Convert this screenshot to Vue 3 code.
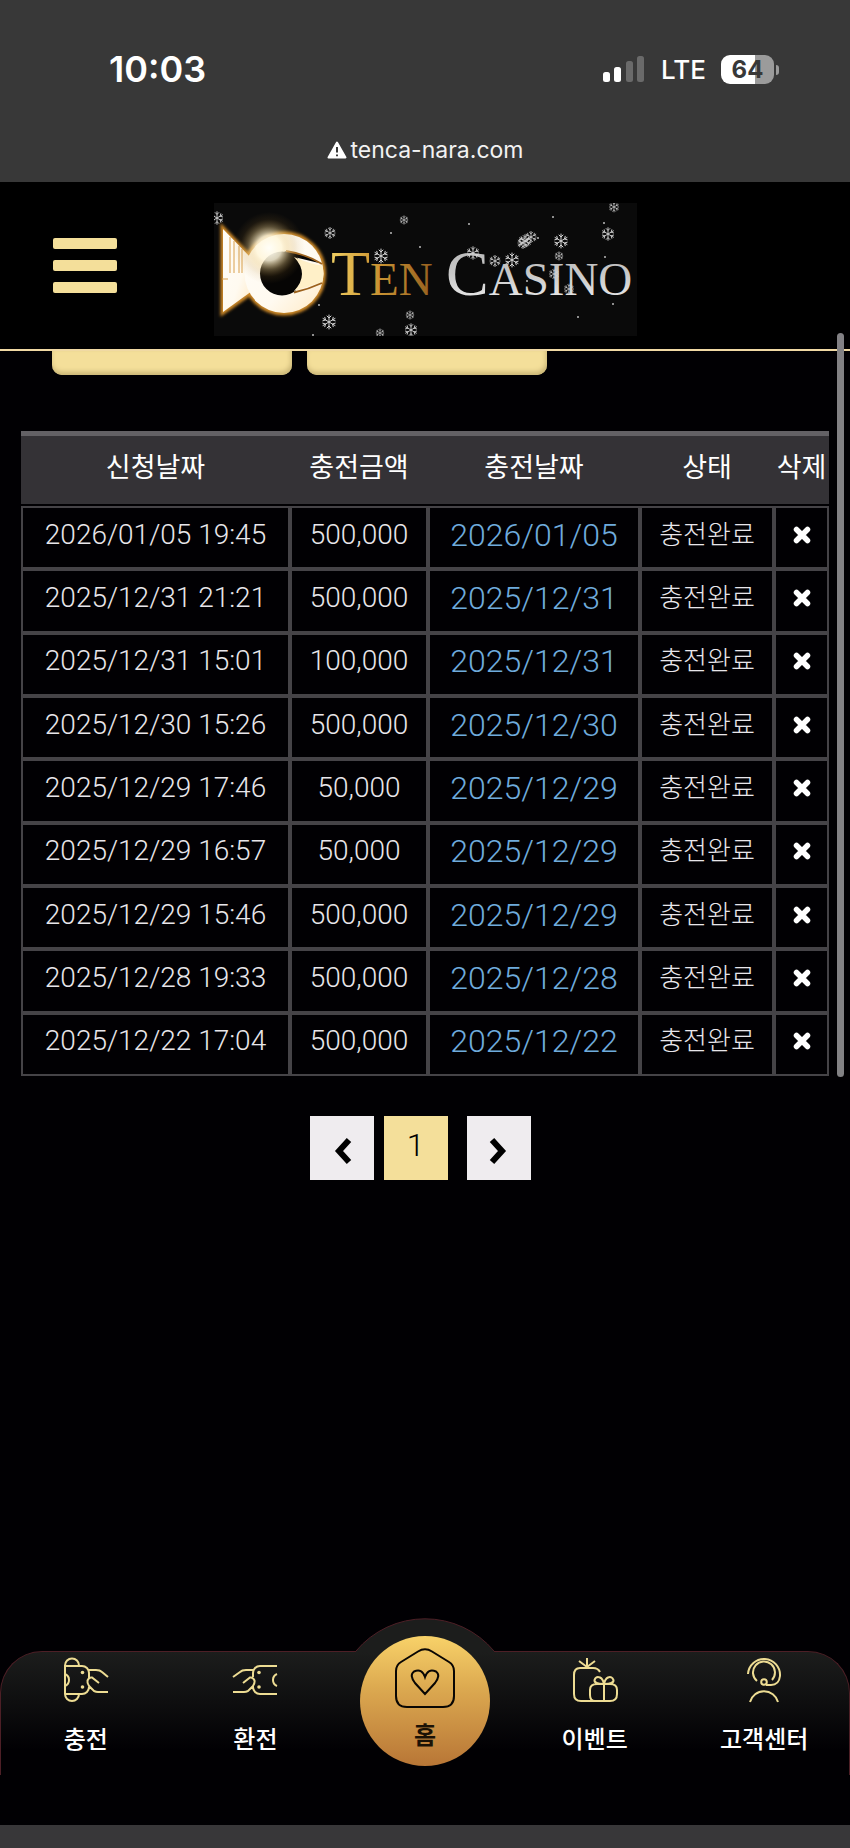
<template>
  <div class="page">
    <!-- Phone status bar and address -->
    <div class="status">
      <div class="status-row">
        <span class="clock">10:03</span>
        <div class="status-right">
          <svg class="signal" viewBox="0 0 42 28" fill="#fff" aria-hidden="true">
            <rect x="0" y="17" width="7" height="10" rx="2.5" />
            <rect x="11" y="12" width="7" height="15" rx="2.5" />
            <rect x="23" y="6" width="7" height="21" rx="2.5" opacity="0.25" />
            <rect x="34" y="1" width="7" height="26" rx="2.5" opacity="0.25" />
          </svg>
          <span class="network">LTE</span>
          <div class="battery"><span class="battery-level">64</span></div>
        </div>
      </div>
      <div class="address">
        <svg viewBox="0 0 20 18" aria-hidden="true">
          <path d="M10 1.5 18.5 16.5H1.500Z" fill="#fff" stroke="#fff" stroke-width="2" stroke-linejoin="round" />
          <path d="M10 6v5.500M10 13.500v1.800" stroke="#383838" stroke-width="2" />
        </svg>
        <span>tenca-nara.com</span>
      </div>
    </div>

    <header class="header">
      <button class="menu" type="button" aria-label="메뉴">
        <span></span>
        <span></span>
        <span></span>
      </button>
      <a class="logo" href="#" aria-label="Ten Casino">
        <svg viewBox="0 0 423 133">
          <defs>
            <linearGradient id="gold" x1="0" x2="1" y1="0" y2="0">
              <stop offset="0" stop-color="#f0cf63" />
              <stop offset="0.4" stop-color="#d09a36" />
              <stop offset="1" stop-color="#96601f" />
            </linearGradient>
            <linearGradient id="silver" x1="0" x2="0" y1="0" y2="1">
              <stop offset="0" stop-color="#b4b4b4" />
              <stop offset="0.5" stop-color="#c8c8c8" />
              <stop offset="1" stop-color="#f4f4f4" />
            </linearGradient>
            <linearGradient id="fish" x1="0" x2="1" y1="0" y2="1">
              <stop offset="0" stop-color="#fffdf8" />
              <stop offset="0.6" stop-color="#fffaf0" />
              <stop offset="1" stop-color="#ffe9c4" />
            </linearGradient>
            <radialGradient id="flare">
              <stop offset="0" stop-color="#fffef8" />
              <stop offset="0.35" stop-color="#fff6da" stop-opacity="0.85" />
              <stop offset="0.6" stop-color="#e8c883" stop-opacity="0.35" />
              <stop offset="0.8" stop-color="#b98a3a" stop-opacity="0.1" />
              <stop offset="1" stop-color="#b98a3a" stop-opacity="0" />
            </radialGradient>
            <filter id="glow" x="-20%" y="-20%" width="140%" height="140%">
              <feGaussianBlur stdDeviation="1.5" />
            </filter>
            <g id="flake" fill="none" stroke="#d6d6d6" stroke-width="1" stroke-linecap="round">
              <path d="M0-7V7M-6-3.500 6 3.500M-6 3.500 6-3.500" />
              <path d="M-2-6 0-4 2-6M-2 6 0 4 2 6M-6.200-1.200-3.500-2-4.200-4.700M6.200 1.200 3.500 2 4.200 4.700M-6.200 1.200-3.500 2-4.200 4.700M6.200-1.200 3.500-2 4.200-4.700" />
            </g>
          </defs>
          <rect width="423" height="133" fill="#0a0a0a" />
          <g fill="none" stroke="#d08a28" stroke-width="5" filter="url(#glow)">
            <path d="M9 26 32 50V93L9 109Z" />
            <circle cx="70" cy="70.500" r="39.500" />
          </g>
          <path d="M9 26 38 56V88L9 109Z" fill="url(#fish)" />
          <path d="M16 34V70M20 38V70M25 43V70M28 46V70M8 76H14" stroke="#d9a04c" />
          <circle cx="70" cy="70.500" r="39.500" fill="url(#fish)" />
          <circle cx="68" cy="70.500" r="22" fill="#060504" />
          <path d="M70 48Q90 50 105 60L80 54Z" fill="#060504" />
          <path d="M80 54Q96 61 108 62.500 111 71 108 79Q95 83 80 88Q96 71 80 54Z" fill="#fff0c8" />
          <path d="M72 48Q92 51 108 61M80 89.500Q95 86 108 80" fill="none" stroke="#9c611c" stroke-width="1.800" />
          <circle cx="55" cy="45" r="36" fill="url(#flare)" />
          <g class="brand" fill="url(#gold)">
            <text x="117" y="92"><tspan class="cap">T</tspan><tspan>EN</tspan></text>
          </g>
          <g class="brand" fill="url(#silver)">
            <text x="232" y="92"><tspan class="cap">C</tspan><tspan>ASINO</tspan></text>
          </g>
          <use
            v-for="(flake, index) in flakes"
            :key="index"
            href="#flake"
            :transform="`translate(${flake[0]} ${flake[1]}) scale(${flake[2]})`"
          />
          <circle v-for="(dot, index) in dots" :key="`dot-${index}`" :cx="dot[0]" :cy="dot[1]" r="1" fill="#bbb" />
        </svg>
      </a>
    </header>

    <main class="content">
      <div class="tabs">
        <button class="tab" type="button" aria-label="충전신청"></button>
        <button class="tab" type="button" aria-label="충전내역"></button>
      </div>

      <table class="history">
        <colgroup>
          <col class="col-requested" />
          <col class="col-amount" />
          <col class="col-date" />
          <col class="col-state" />
          <col class="col-delete" />
        </colgroup>
        <thead>
          <tr>
            <th v-for="title in titles" :key="title">{{ title }}</th>
          </tr>
        </thead>
        <tbody>
          <tr v-for="row in rows" :key="row.requested">
            <td>{{ row.requested }}</td>
            <td>{{ row.amount }}</td>
            <td class="date">{{ row.requested.split(' ')[0] }}</td>
            <td class="state">충전완료</td>
            <td>
              <button class="delete" type="button" aria-label="삭제">
                <svg viewBox="0 0 18 18">
                  <path d="M3.500 3.500 14.500 14.500M14.500 3.500 3.500 14.500" stroke="#fff" stroke-width="5.500" stroke-linecap="round" />
                </svg>
              </button>
            </td>
          </tr>
        </tbody>
      </table>

      <nav class="pagination" aria-label="페이지">
        <button class="page-button" type="button" aria-label="이전">
          <svg viewBox="0 0 20 28"><path d="M17 3 7 14 17 25" /></svg>
        </button>
        <button class="page-button current" type="button">1</button>
        <button class="page-button next" type="button" aria-label="다음">
          <svg viewBox="0 0 20 28"><path d="M3 3 13 14 3 25" /></svg>
        </button>
      </nav>
      <div class="scrollbar"></div>
    </main>

    <nav class="bottom-nav">
      <svg class="hump" viewBox="0 0 140 34" aria-hidden="true">
        <path d="M1 33A90 90 0 0 1 139 33V34H1Z" fill="#1c1d1c" />
        <path d="M1 33A90 90 0 0 1 139 33" fill="none" stroke="#4d1f26" />
      </svg>
      <div class="nav-items">
        <a class="nav-item" href="#">
          <svg class="nav-icon" viewBox="0 0 44 44">
            <path d="M1 36V7.500a6.500 6.500 0 0 1 14 0V8M1 8H18a7 7 0 0 1 7 7V20M1 36H18a7 7 0 0 0 7-7M1 36a7 7 0 0 0 14 0M1 16a6.500 6.500 0 0 1 0 12M25 12H32Q36 12 38 14L44 19M35 25 28 19.500Q25 19 23.500 22.500 23 25 25 28L30 33Q32 34 34 34H44" />
            <g class="dots"><circle cx="18.500" cy="14.500" r="1.800" /><circle cx="18.500" cy="29" r="1.800" /></g>
          </svg>
          <span>충전</span>
        </a>
        <a class="nav-item" href="#">
          <svg class="nav-icon" viewBox="0 0 44 44">
            <path d="M44 8H27a7 7 0 0 0-7 7V19M44 36H27a7 7 0 0 1-7-7V28M44 16a6.500 6.500 0 0 0 0 12M20 12H13Q9 12 7 14L0 19M10 25 17 19.500Q20 19 21.500 22.500 22 25 20 28L15 33Q13 34 11 34H0" />
            <g class="dots"><circle cx="26" cy="14.500" r="1.800" /><circle cx="26" cy="29" r="1.800" /></g>
          </svg>
          <span>환전</span>
        </a>
        <a class="nav-item home" href="#">
          <span class="home-disc">
            <svg class="home-icon" viewBox="0 0 60 60">
              <path d="M23 3.500Q30-1 37 3.500L54 14Q59 17 59 23V48Q59 59 48 59H12Q1 59 1 48V23Q1 17 6 14Z" />
              <path d="M30 46 20 35Q14 27 19 23.500 27 20 30 29 33 20 41 23.500 46 27 40 35Z" />
            </svg>
            <span>홈</span>
          </span>
        </a>
        <a class="nav-item" href="#">
          <svg class="nav-icon" viewBox="0 0 44 44">
            <path d="M27 14Q25 10 20 10H7Q1 10 1 17V36Q1 43 8 43H37Q44 43 44 36V32Q44 26 37 26H24Q17 26 17 32V37Q17 43 22 43M31 43V26M31 26Q21 26 21.500 22 23 18 27 19.500 30 21 31 26 32 21 35 19.500 39 18 40.500 22 41 26 31 26M14 10V0M14 9 6 3M14 9 22 3" />
          </svg>
          <span>이벤트</span>
        </a>
        <a class="nav-item" href="#">
          <svg class="nav-icon" viewBox="0 0 44 44">
            <path d="M6 16A16 16 0 1 1 38 18Q37 27 29 27H24M15 23A11 11 0 1 1 30 22M8 44A14.500 14.500 0 0 1 36 44" />
            <circle cx="22" cy="24" r="2.800" />
          </svg>
          <span>고객센터</span>
        </a>
      </div>
    </nav>
    <div class="browser-bar"></div>
  </div>
</template>

<script setup>
const titles = ['신청날짜', '충전금액', '충전날짜', '상태', '삭제']

const rows = [
  { requested: '2026/01/05 19:45', amount: '500,000' },
  { requested: '2025/12/31 21:21', amount: '500,000' },
  { requested: '2025/12/31 15:01', amount: '100,000' },
  { requested: '2025/12/30 15:26', amount: '500,000' },
  { requested: '2025/12/29 17:46', amount: '50,000' },
  { requested: '2025/12/29 16:57', amount: '50,000' },
  { requested: '2025/12/29 15:46', amount: '500,000' },
  { requested: '2025/12/28 19:33', amount: '500,000' },
  { requested: '2025/12/22 17:04', amount: '500,000' }
]

// x, y and scale of each snowflake over the logo
const flakes = [
  [3, 15, 0.9],
  [116, 30, 0.8],
  [190, 17, 0.6],
  [167, 53, 1],
  [115, 119, 1],
  [196, 112, 0.6],
  [197, 127, 0.9],
  [166, 130, 0.6],
  [259, 50, 0.9],
  [281, 58, 0.8],
  [298, 57, 1],
  [309, 40, 0.8],
  [311, 38, 0.9],
  [317, 34, 0.8],
  [347, 38, 1],
  [345, 53, 0.6],
  [340, 71, 0.7],
  [355, 86, 0.7],
  [394, 31, 0.9],
  [400, 4, 0.7]
]

const dots = [
  [177, 30],
  [206, 44],
  [255, 21],
  [339, 14],
  [324, 35],
  [390, 20],
  [391, 54],
  [399, 101],
  [364, 114],
  [105, 102],
  [99, 132],
  [313, 78]
]
</script>

<style>
body {
  margin: 0;
  background: #010003;
}
</style>

<style scoped>
.page {
  display: flex;
  flex-direction: column;
  min-height: 100vh;
  background: #010003;
  color: #fff;
  font-family: Roboto, "Noto Sans CJK KR", sans-serif;
}

button {
  padding: 0;
  border: 0;
  font: inherit;
  cursor: pointer;
}

a {
  color: inherit;
  text-decoration: none;
}

.status {
  box-sizing: border-box;
  height: 182px;
  padding-top: 48px;
  background: #383838;
  font-family: Inter, sans-serif;
}

.status-row {
  display: flex;
  align-items: center;
  justify-content: space-between;
  height: 42px;
  padding: 0 76px 0 109px;
}

.clock {
  font-size: 36px;
  font-weight: 600;
}

.status-right {
  display: flex;
  align-items: center;
}

.signal {
  width: 42px;
  height: 28px;
  margin-right: 16px;
}

.network {
  margin-right: 15px;
  font-size: 26px;
  font-weight: 500;
}

.battery {
  position: relative;
  width: 53px;
  height: 29px;
  border-radius: 9px;
  background: linear-gradient(to right, #fff 64%, #9b9b9b 64%);
  color: #383838;
  text-align: center;
}

.battery::after {
  content: "";
  position: absolute;
  top: 10px;
  right: -5px;
  width: 3px;
  height: 10px;
  border-radius: 0 3px 3px 0;
  background: #9b9b9b;
}

.battery-level {
  font-size: 24px;
  font-weight: 700;
  line-height: 29px;
}

.address {
  display: flex;
  align-items: center;
  justify-content: center;
  gap: 4px;
  height: 32px;
  margin-top: 44px;
  font-size: 23px;
  color: #f2f2f2;
}

.address svg {
  width: 20px;
  height: 18px;
}

.header {
  box-sizing: border-box;
  display: grid;
  grid-template-columns: 1fr 423px 1fr;
  align-items: center;
  height: 169px;
  border-bottom: 2px solid #f0d9a4;
  background: #000;
}

.menu {
  display: flex;
  flex-direction: column;
  gap: 11px;
  width: 64px;
  margin-left: 53px;
  background: none;
}

.menu span {
  height: 11px;
  border-radius: 2px;
  background: #f4df9a;
}

.logo {
  padding-top: 8px;
}

.logo svg {
  display: block;
  width: 100%;
}

.brand {
  font-family: "Liberation Serif", serif;
  font-size: 47px;
}

.brand .cap {
  font-size: 64px;
}

.content {
  position: relative;
  flex: 1;
  padding: 0 21px;
}

.tabs {
  display: flex;
  gap: 15px;
  padding: 0 31px;
}

.tab {
  width: 240px;
  height: 24px;
  border-radius: 0 0 10px 10px;
  background: #f4df9a;
  box-shadow: inset -1px -3px 5px #c9b576;
}

.history {
  width: 100%;
  height: 645px;
  margin-top: 56px;
  border-spacing: 0;
  table-layout: fixed;
  text-align: center;
}

.col-requested {
  width: 269px;
}

.col-amount {
  width: 138px;
}

.col-date {
  width: 212px;
}

.col-state {
  width: 134px;
}

.col-delete {
  width: 55px;
}

.history th {
  height: 58px;
  padding: 0 0 10px;
  border-top: 5px solid #636165;
  border-bottom: 2px solid #010003;
  background: #343236;
  background-clip: padding-box;
  font-size: 27px;
  font-weight: 400;
  white-space: nowrap;
}

.history td {
  padding: 0 0 6px;
  border: 2px solid #454347;
  color: #e8e6ea;
  font-size: 28px;
  font-weight: 300;
  line-height: 32px;
  white-space: nowrap;
}

.history .date {
  color: #6fabdc;
  font-size: 32px;
}

.history .state {
  font-size: 26px;
}

.delete {
  display: block;
  width: 18px;
  height: 18px;
  margin: 0 auto;
  background: none;
}

.delete svg {
  display: block;
}

.pagination {
  display: flex;
  gap: 10px;
  justify-content: center;
  margin-top: 40px;
  padding-right: 10px;
}

.page-button {
  display: flex;
  align-items: center;
  justify-content: center;
  width: 64px;
  height: 64px;
  padding-top: 6px;
  background: #efecef;
}

.page-button svg {
  width: 20px;
  height: 28px;
  fill: none;
  stroke: #000;
  stroke-width: 6;
}

.page-button.current {
  padding: 0 0 6px;
  background: #f4df9a;
  color: #000;
  font-size: 32px;
  font-weight: 300;
}

.page-button.next {
  margin-left: 9px;
}

.scrollbar {
  position: absolute;
  top: -18px;
  right: 6px;
  width: 7px;
  height: 744px;
  border-radius: 4px;
  background: #828184;
}

.bottom-nav {
  position: relative;
  padding-bottom: 50px;
  background: #010003;
}

.hump {
  position: absolute;
  top: -33px;
  left: 50%;
  z-index: 1;
  width: 140px;
  height: 34px;
  margin-left: -70px;
}

.nav-items {
  display: grid;
  grid-template-columns: repeat(5, 1fr);
  height: 123px;
  border: 1px solid #4d1f26;
  border-bottom: 0;
  border-radius: 42px 42px 0 0;
  background: linear-gradient(#1c1d1c, #010003 80%);
}

.nav-item {
  display: flex;
  flex-direction: column;
  align-items: center;
  gap: 18px;
  padding-top: 6px;
  font-family: "Noto Sans CJK KR", sans-serif;
  font-size: 24px;
  font-weight: 500;
  line-height: 36px;
}

.nav-icon {
  width: 44px;
  height: 44px;
  overflow: visible;
  fill: none;
  stroke: #eddc93;
  stroke-width: 2;
}

.nav-icon .dots {
  fill: #eddc93;
  stroke: none;
}

.nav-item.home {
  position: relative;
  z-index: 2;
  padding: 0;
  color: #1b1206;
  font-weight: 700;
}

.home-disc {
  display: flex;
  flex-direction: column;
  align-items: center;
  gap: 8px;
  box-sizing: border-box;
  width: 130px;
  height: 130px;
  margin-top: -16px;
  padding-top: 12px;
  border-radius: 50%;
  background: linear-gradient(#f8d269, #dca950 40%, #b87636);
}

.home-icon {
  flex: none;
  width: 60px;
  height: 60px;
  fill: none;
  stroke: #090603;
  stroke-width: 2;
}

.browser-bar {
  height: 23px;
  background: #383739;
}
</style>
